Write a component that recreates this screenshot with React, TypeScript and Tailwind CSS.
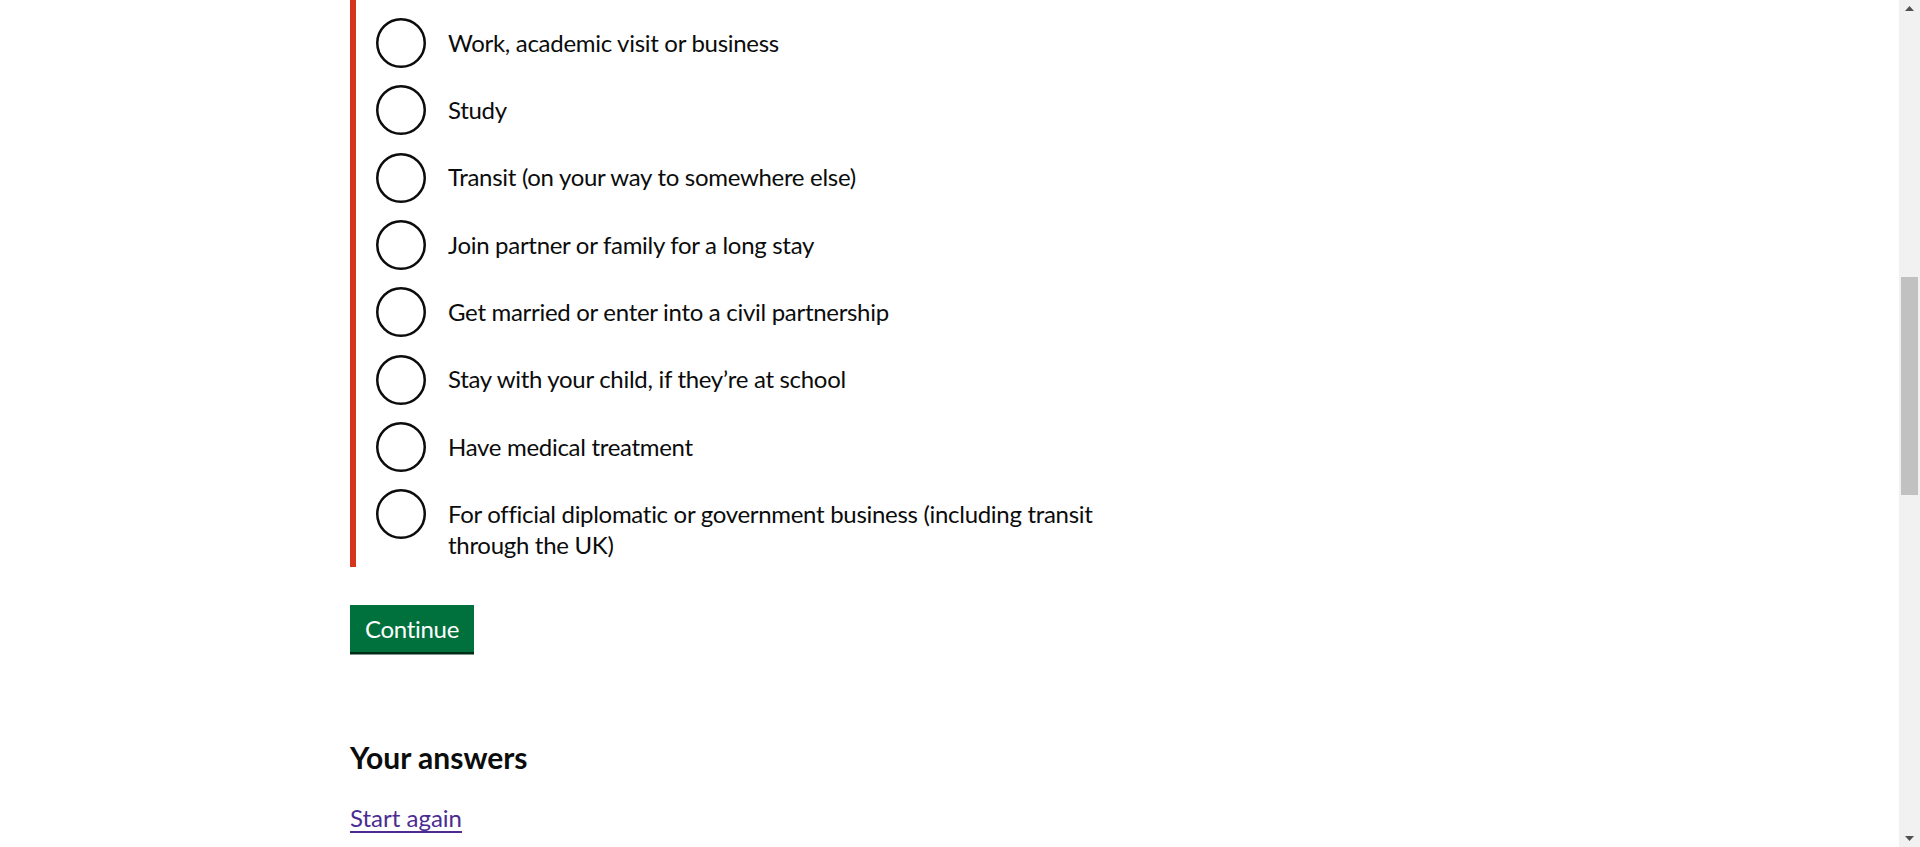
const options = [
  "Work, academic visit or business",
  "Study",
  "Transit (on your way to somewhere else)",
  "Join partner or family for a long stay",
  "Get married or enter into a civil partnership",
  "Stay with your child, if they’re at school",
  "Have medical treatment",
  "For official diplomatic or government business (including transit through the UK)",
];

function Radio({ label }: { label: string }) {
  return (
    <div className="flex items-start">
      <svg width="50" height="50" viewBox="0 0 50 50" className="shrink-0">
        <circle cx="25" cy="25" r="23.75" fill="white" stroke="#0b0c0c" strokeWidth="2.5" />
      </svg>
      <label className="pl-[22px] pt-[8.5px] pb-[7px] max-w-[722px] text-[24px] leading-[31px] tracking-[-0.3px] text-[#0b0c0c]">
        {label}
      </label>
    </div>
  );
}

function Scrollbar() {
  return (
    <div className="w-[21px] h-[847px] shrink-0 bg-[#f1f1f1] flex flex-col items-center">
      <div className="h-[17px] flex items-center justify-center">
        <svg width="9" height="5" viewBox="0 0 9 5">
          <polygon points="4.5,0 9,5 0,5" fill="#505050" />
        </svg>
      </div>
      <div className="mt-[260px] w-[17px] h-[218px] bg-[#c1c1c1]" />
      <div className="flex-1" />
      <div className="h-[17px] flex items-center justify-center">
        <svg width="9" height="5" viewBox="0 0 9 5">
          <polygon points="0,0 9,0 4.5,5" fill="#505050" />
        </svg>
      </div>
    </div>
  );
}

export default function App() {
  return (
    <div className="flex w-[1920px] h-[847px] overflow-hidden bg-white font-['Lato',sans-serif]">
      <main className="flex-1 pl-[350px]">
        <div className="border-l-[6px] border-[#d4351c] pl-[20px] pt-[18px] flex flex-col gap-[17.35px]">
          {options.map((o) => (
            <Radio key={o} label={o} />
          ))}
        </div>

        <button
          type="button"
          className="mt-[38px] bg-[#00703c] text-white text-[24px] leading-none tracking-[-0.3px] pt-[12.5px] pb-[11px] px-[15px] shadow-[0_2.5px_0_#002d18]"
        >
          Continue
        </button>

        <h2 className="mt-[86.5px] text-[30px] leading-[37.5px] font-bold text-[#0b0c0c]">Your answers</h2>

        <a href="#" className="inline-block mt-[26px] text-[24px] leading-[31px] text-[#4c2c92] underline underline-offset-[4px]">
          Start again
        </a>
      </main>
      <Scrollbar />
    </div>
  );
}
